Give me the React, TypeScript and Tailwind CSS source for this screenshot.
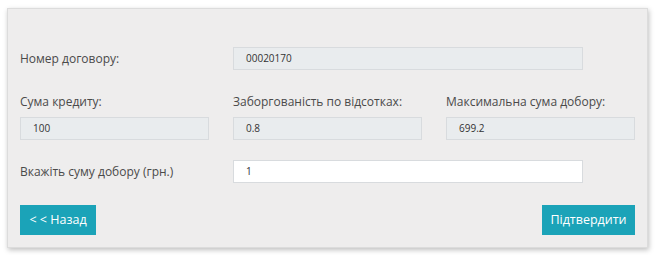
export default function App() {
  const label = "text-[12px] text-[#4a4a4a] leading-none";
  const ro = "h-[23px] border border-[#d8dbde] bg-[#e9ecee] px-3 flex items-center text-[10px] text-[#333]";
  return (
    <div className="w-[658px] h-[255px] bg-white pt-[8px] pl-[7px]" style={{ fontFamily: '"Open Sans", "Noto Sans", sans-serif' }}>
      <div className="w-[641px] h-[240px] bg-[#eeeded] border border-[#dcdcdc] shadow-[1px_2px_5px_rgba(0,0,0,0.25)] px-[12px] pt-[38px]">
        <div className="grid grid-cols-[189px_189px_189px] gap-x-[24px]">
          <div className="flex items-center h-[23px]">
            <span className={label}>Номер договору:</span>
          </div>
          <div className={`${ro} col-span-2 w-[350px]`}>00020170</div>

          <div className="mt-[25px] mb-[8px] flex items-center h-[14px]">
            <span className={label}>Сума кредиту:</span>
          </div>
          <div className="mt-[25px] mb-[8px] flex items-center h-[14px]">
            <span className={label}>Заборгованість по відсотках:</span>
          </div>
          <div className="mt-[25px] mb-[8px] flex items-center h-[14px]">
            <span className={label}>Максимальна сума добору:</span>
          </div>

          <div className={ro}>100</div>
          <div className={ro}>0.8</div>
          <div className={ro}>699.2</div>

          <div className="mt-[20px] flex items-center h-[23px]">
            <span className={label}>Вкажіть суму добору (грн.)</span>
          </div>
          <div className="mt-[20px] col-span-2 w-[350px] h-[23px] border border-[#d8dbde] bg-white px-3 flex items-center text-[10px] text-[#333]">
            1
          </div>
        </div>
        <div className="mt-[22px] flex justify-between">
          <button className="h-[30px] w-[76px] bg-[#1ba3b8] text-white text-[12.5px] flex items-center justify-center">
            &lt; &lt; Назад
          </button>
          <button className="h-[30px] w-[93px] bg-[#1ba3b8] text-white text-[12.5px] flex items-center justify-center">
            Підтвердити
          </button>
        </div>
      </div>
    </div>
  );
}
